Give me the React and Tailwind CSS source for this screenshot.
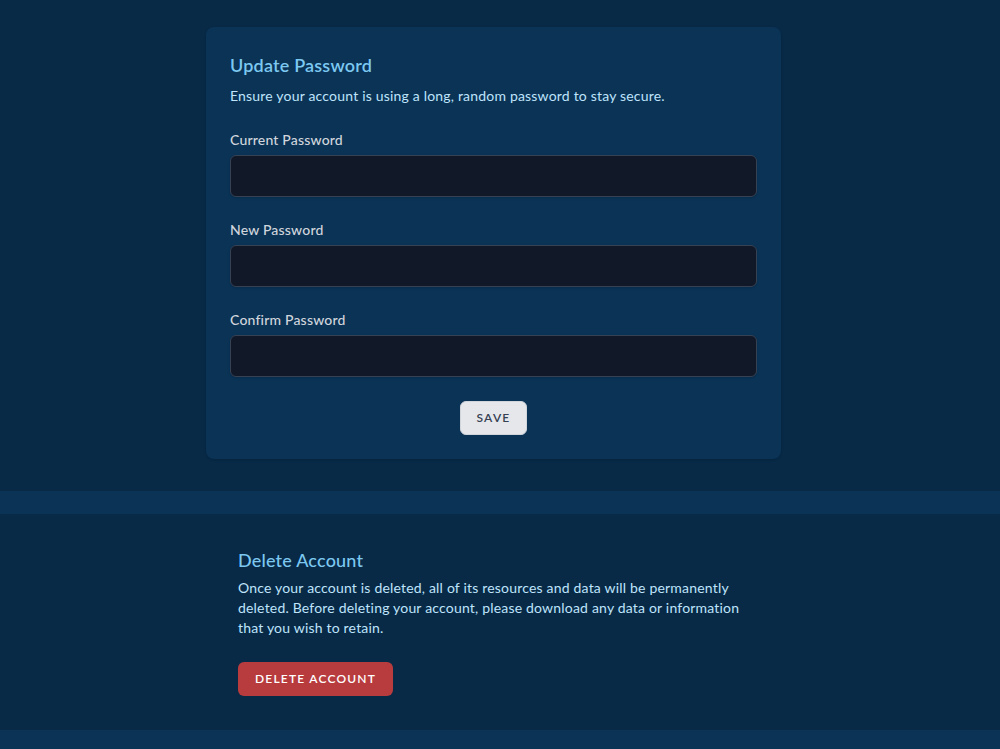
import React from 'react';

const Field = ({ label }) => (
  <div>
    <label className="block text-sm font-medium text-gray-300">{label}</label>
    <input
      type="password"
      className="mt-[5px] block w-full h-[42px] rounded-md border border-gray-700 bg-[#111827] px-3 text-gray-300 shadow-sm focus:outline-none"
    />
  </div>
);

export default function App() {
  return (
    <div className="min-h-[749px] bg-[#082a47] font-['Lato',sans-serif] tracking-[0.012em]">
      {/* Update password */}
      <div className="pt-[27px] pb-[32px]">
        <div className="ml-[206px] w-[575px] rounded-lg bg-[#0a3356] p-6 shadow">
          <h2 className="text-lg font-semibold leading-7 text-[#7cc8f0]">Update Password</h2>
          <p className="mt-[7px] text-sm text-[#bfe4fb]">
            Ensure your account is using a long, random password to stay secure.
          </p>

          <form className="mt-6 flex flex-col gap-[23px]">
            <Field label="Current Password" />
            <Field label="New Password" />
            <Field label="Confirm Password" />

            <div className="flex justify-center pt-[1px]">
              <button
                type="button"
                className="rounded-md border border-gray-300 bg-gray-200 px-4 py-2 text-xs font-semibold uppercase tracking-widest text-gray-700"
              >
                Save
              </button>
            </div>
          </form>
        </div>
      </div>

      <div className="h-[23px] bg-[#0a3356]" />

      {/* Delete account */}
      <div className="px-[238px] pt-[32px] pb-[34px]">
        <h2 className="text-lg font-medium leading-7 text-[#7cc8f0]">Delete Account</h2>
        <p className="mt-1 max-w-lg text-sm leading-5 text-[#bfe4fb]">
          Once your account is deleted, all of its resources and data will be permanently deleted. Before deleting your account, please download any data or information that you wish to retain.
        </p>
        <button
          type="button"
          className="mt-6 rounded-md border border-transparent bg-[#b83c3e] px-4 py-2 text-xs font-semibold uppercase tracking-widest text-white"
        >
          Delete Account
        </button>
      </div>

      <div className="h-[19px] bg-[#0a3356]" />
    </div>
  );
}
